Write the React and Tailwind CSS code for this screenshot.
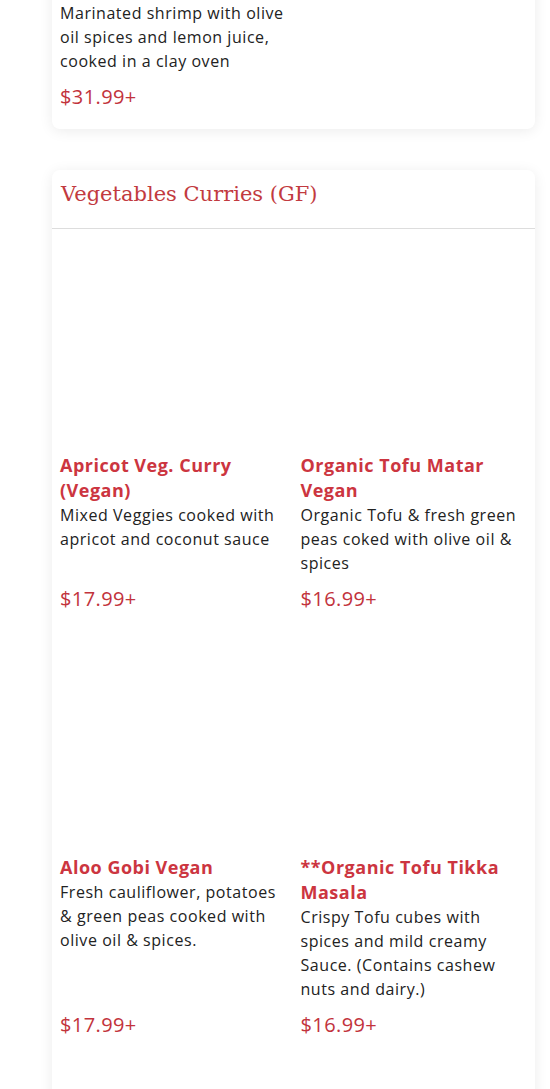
const font = { fontFamily: '"Open Sans", Roboto, sans-serif' };

const items = [
  {
    name: ['Apricot Veg. Curry', '(Vegan)'],
    desc: ['Mixed Veggies cooked with', 'apricot and coconut sauce'],
    price: '$17.99+',
  },
  {
    name: ['Organic Tofu Matar', 'Vegan'],
    desc: ['Organic Tofu & fresh green', 'peas coked with olive oil &', 'spices'],
    price: '$16.99+',
  },
  {
    name: ['Aloo Gobi Vegan'],
    desc: ['Fresh cauliflower, potatoes', '& green peas cooked with', 'olive oil & spices.'],
    price: '$17.99+',
  },
  {
    name: ['**Organic Tofu Tikka', 'Masala'],
    desc: ['Crispy Tofu cubes with', 'spices and mild creamy', 'Sauce. (Contains cashew', 'nuts and dairy.)'],
    price: '$16.99+',
  },
];

const Lines = ({ lines }) =>
  lines.map((line) => (
    <span key={line} className="block whitespace-nowrap">
      {line}
    </span>
  ));

const MenuItem = ({ item, image = true }) => (
  <div className="flex flex-col pb-[18px]">
    {image && <div className="mt-[12px] h-[212px] bg-white" />}
    <h3 className="text-[18px] leading-[25px] font-bold tracking-[0.5px] text-[#cc3540]">
      <Lines lines={item.name} />
    </h3>
    <p className="text-[16px] leading-[24px] tracking-[0.55px] text-[#222222]">
      <Lines lines={item.desc} />
    </p>
    <div className="mt-auto pt-[10px] text-[20px] leading-[28px] tracking-[0.4px] text-[#c2333c]">
      {item.price}
    </div>
  </div>
);

export default function App() {
  return (
    <div className="min-h-screen bg-white overflow-hidden" style={font}>
      <div className="ml-[52px] w-[483px]">
        {/* previous section, scrolled off the top */}
        <div className="-mt-[36px] rounded-lg bg-white shadow-[0_2px_14px_rgba(0,0,0,0.08)] px-2">
          <div className="w-[233px] pt-[12px]">
            <MenuItem
              image={false}
              item={{
                name: ['Shrimp Tandoori'],
                desc: ['Marinated shrimp with olive', 'oil spices and lemon juice,', 'cooked in a clay oven'],
                price: '$31.99+',
              }}
            />
          </div>
        </div>

        <div className="mt-[41px] rounded-lg bg-white shadow-[0_2px_14px_rgba(0,0,0,0.08)] pb-[300px]">
          <div className="h-[59px] border-b border-[#dddddd] pt-[7px] pl-[9px]">
            <h2
              className="text-[21px] leading-[34px] text-[#c23a40]"
              style={{ fontFamily: '"DejaVu Serif", "Liberation Serif", serif' }}
            >
              Vegetables Curries (GF)
            </h2>
          </div>
          <div className="grid grid-cols-2 gap-x-[14px] px-2">
            {items.map((item) => (
              <MenuItem key={item.name.join(' ')} item={item} />
            ))}
          </div>
        </div>
      </div>
    </div>
  );
}
